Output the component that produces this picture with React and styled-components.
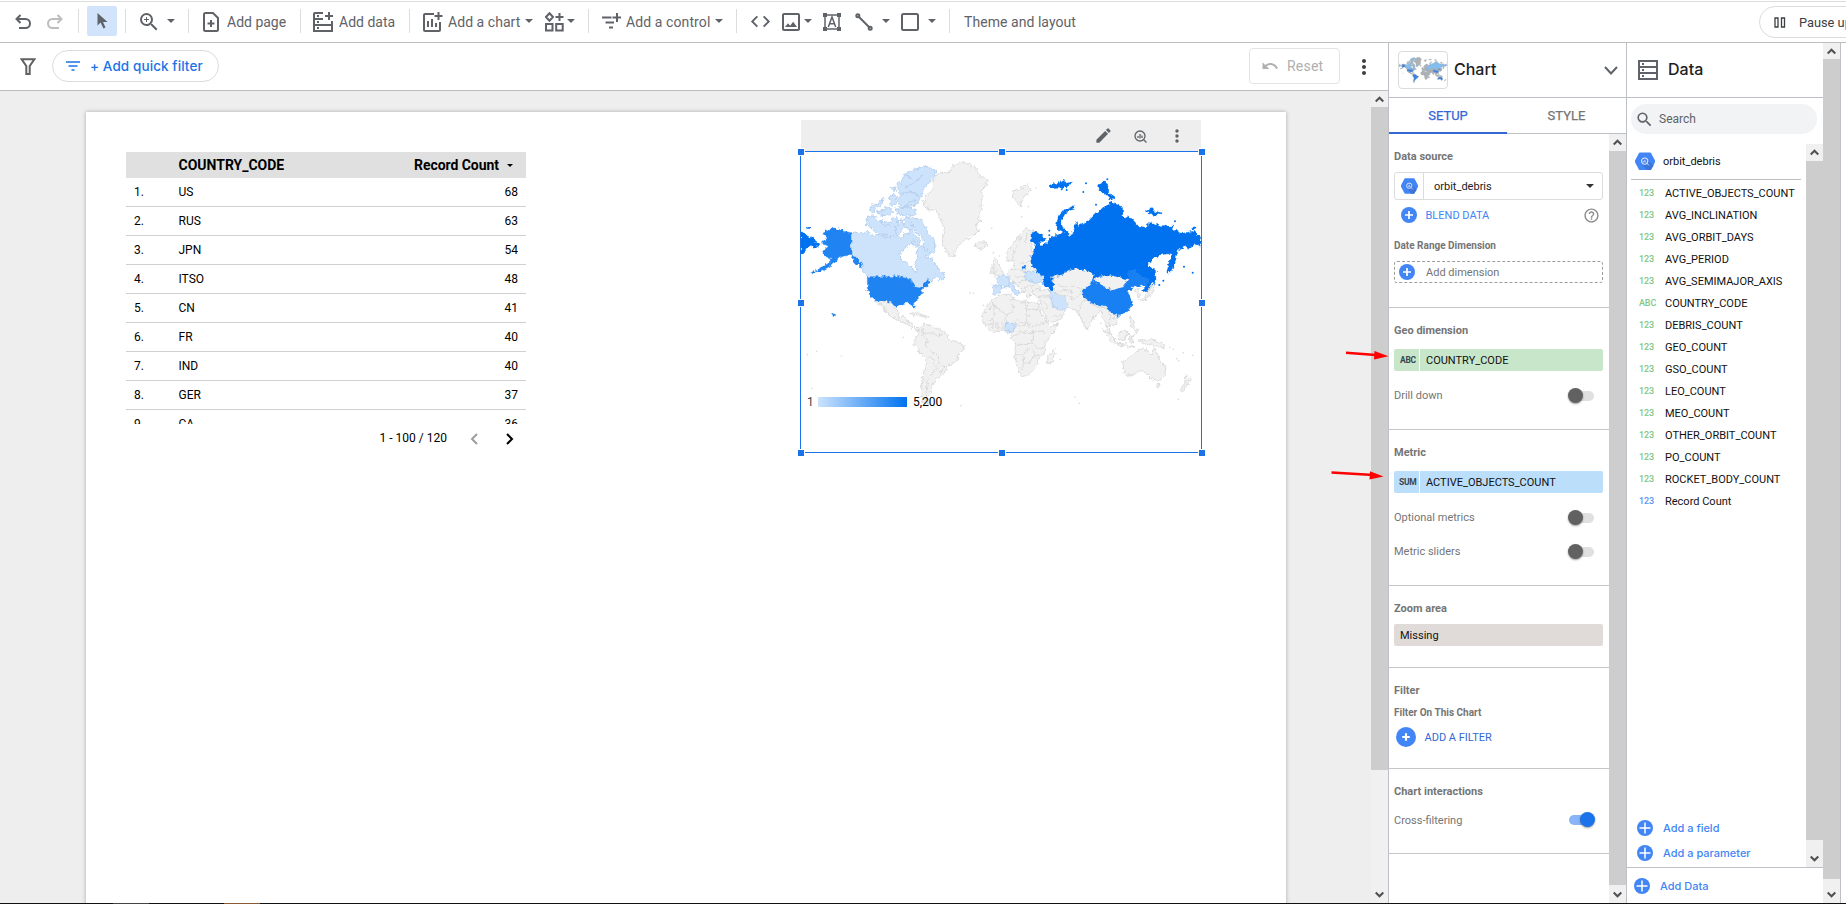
import React from "react";
import styled, { createGlobalStyle } from "styled-components";
import {
  MdCode,
  MdEdit,
  MdHelpOutline,
  MdMoreVert,
  MdOutlineImage,
  MdSearch,
  MdUndo,
  MdZoomIn,
} from "react-icons/md";

const Global = createGlobalStyle`
  * { box-sizing: border-box; }
  body { margin: 0; background: #fff; overflow: hidden; font-family: Roboto, "Liberation Sans", sans-serif; }
  svg { display: block; flex: none; }
`;

/* ---------- frame ---------- */
const Frame = styled.div`
  position: relative;
  width: 1846px;
  height: 904px;
  display: flex;
  flex-direction: column;
  overflow: hidden;
`;
const BottomStrip = styled.div`
  flex: none;
  height: 1px;
  background: linear-gradient(90deg, #111 113px, #444 113px, #444 149px, #111 149px, #111 224px, #8a5a34 224px, #8a5a34 260px, #111 260px);
`;
const Toolbar = styled.header`
  flex: none;
  height: 43px;
  display: flex;
  align-items: center;
  border-bottom: 1px solid #bdbdbd;
  box-shadow: inset 0 1px 0 #fff, inset 0 2px 0 #dcdcdc;
  color: #5f6368;
  overflow: hidden;
`;
const Tool = styled.div`
  flex: none;
  display: flex;
  align-items: center;
  justify-content: flex-start;
  margin-left: ${(p) => p.$gap || 0}px;
  width: ${(p) => p.$w}px;
  height: 30px;
  padding-top: 1px;
`;
const Selected = styled(Tool)`
  padding-top: 0;
  justify-content: center;
  background: #d2e3fc;
  border-radius: 2px;
`;
const ToolText = styled(Tool)`
  font-size: 14px;
  white-space: nowrap;
  letter-spacing: ${(p) => p.$ls || 0}px;
`;
const Sep = styled.i`
  flex: none;
  width: 1px;
  height: 24px;
  margin-left: ${(p) => p.$gap}px;
  background: #dadce0;
`;
const CaretMark = styled.i`
  flex: none;
  width: 0;
  height: 0;
  margin-left: ${(p) => p.$gap || 0}px;
  border: ${(p) => p.$s || 4}px solid transparent;
  border-top-color: ${(p) => p.$c || "#5f6368"};
  border-bottom: 0;
`;
const Pause = styled.div`
  flex: none;
  width: 140px;
  height: 32px;
  margin: 2px 0 0 685px;
  display: flex;
  align-items: center;
  gap: 13px;
  padding-left: 14px;
  border: 1px solid #dadce0;
  border-radius: 16px;
  color: #3c4043;
  font-size: 12.8px;
  white-space: nowrap;
`;
const Body = styled.div`
  flex: 1;
  min-height: 0;
  display: flex;
`;

/* ---------- scroll bars ---------- */
const Bar = styled.div`
  flex: none;
  width: 17px;
  display: flex;
  flex-direction: column;
  background: #f0f0f0;
`;
const BarEnd = styled.div`
  flex: none;
  height: ${(p) => p.$h}px;
  padding: ${(p) => (p.$down ? "0 0 5px" : "5px 0 0")};
  display: flex;
  align-items: ${(p) => (p.$down ? "flex-end" : "flex-start")};
  justify-content: center;
`;
const Thumb = styled.div`
  flex: none;
  height: ${(p) => p.$h}px;
  background: #cdcdcd;
`;
const Grow = styled.div`
  flex: 1;
`;
const Chevron = ({ down }) => (
  <svg width="9" height="7" viewBox="0 0 9 7">
    <path d={down ? "M.7 1.500 4.500 5.200 8.300 1.500" : "M.7 5.500 4.500 1.700 8.300 5.500"} fill="none" stroke="#505050" strokeWidth="2.1" />
  </svg>
);
const ScrollBar = ({ top = 17, thumb, bottom = 17 }) => (
  <Bar>
    <BarEnd $h={top}><Chevron /></BarEnd>
    <Thumb $h={thumb} />
    <Grow />
    <BarEnd $h={bottom} $down><Chevron down /></BarEnd>
  </Bar>
);

/* ---------- left side ---------- */
const Workspace = styled.main`
  flex: none;
  width: 1388px;
  display: flex;
  flex-direction: column;
`;
const FilterBar = styled.div`
  flex: none;
  height: 48px;
  display: flex;
  align-items: center;
  padding: 0 12px 0 20px;
  border-bottom: 1px solid #bdbdbd;
`;
const QuickFilter = styled.div`
  width: 167px;
  height: 32px;
  margin: -1px 0 0 16px;
  padding-left: 13px;
  display: flex;
  align-items: center;
  gap: 10px;
  border: 1px solid #dadce0;
  border-radius: 16px;
  color: #1a73e8;
  font: 500 13.5px Inter, Roboto, sans-serif;
  letter-spacing: 0.1px;
  white-space: nowrap;
`;
const Reset = styled.div`
  width: 91px;
  height: 36px;
  margin: -1px 12px 0 auto;
  padding-left: 11px;
  display: flex;
  align-items: center;
  gap: 8px;
  border: 1px solid #e4e4e4;
  border-radius: 4px;
  color: #b0b0b0;
  font-size: 14px;
  letter-spacing: 0.2px;
`;
const Canvas = styled.div`
  flex: 1;
  min-height: 0;
  display: flex;
`;
const Stage = styled.div`
  flex: 1;
  background: #eee;
  padding: 21px 0 0 86px;
  overflow: hidden;
`;
const Page = styled.div`
  width: 1200px;
  height: 900px;
  padding: 8px 84px 0 40px;
  display: flex;
  justify-content: space-between;
  background: #fff;
  box-shadow: 0 0 4px rgba(0, 0, 0, 0.3);
`;
const TableBox = styled.section`
  width: 400px;
  margin-top: 32px;
  color: #000;
`;
const TableHead = styled.div`
  height: 26px;
  display: flex;
  align-items: center;
  justify-content: space-between;
  padding: 0 13px 0 52.5px;
  background: #e0e0e0;
  font-size: 14px;
  font-weight: 700;
`;
const HeadRight = styled.span`
  display: flex;
  align-items: center;
  letter-spacing: -0.05px;
`;
const Rows = styled.div`
  height: 246px;
  overflow: hidden;
`;
const Row = styled.div`
  height: 29px;
  display: flex;
  align-items: center;
  padding: 0 8px 1px;
  border-bottom: 1px solid #d0d0d0;
  font-size: 12px;
  line-height: 26px;
`;
const Index = styled.span`
  width: 44.5px;
`;
const Code = styled.span`
  flex: 1;
`;
const Pager = styled.div`
  display: flex;
  align-items: center;
  justify-content: flex-end;
  padding: 6px 12px 0 0;
  font-size: 12px;
`;
const PagerArrows = styled.span`
  display: flex;
  gap: 28px;
  margin: 3px 0 0 23px;
`;
const ChartBox = styled.section`
  width: 402px;
`;
const ChartBar = styled.div`
  width: 400px;
  height: 31px;
  margin-left: 1px;
  display: flex;
  align-items: center;
  justify-content: flex-end;
  padding-right: 16px;
  background: #eee;
  color: #5f6368;
`;
const Selection = styled.div`
  position: relative;
  width: 402px;
  height: 302px;
  border: 1px solid #1a73e8;
`;
const Handle = styled.i`
  position: absolute;
  left: ${(p) => p.$x - 4}px;
  top: ${(p) => p.$y - 4}px;
  width: 8px;
  height: 8px;
  background: #1a73e8;
  border: 1px solid #fff;
`;
const Legend = styled.div`
  position: absolute;
  left: 6px;
  top: 243px;
  display: flex;
  align-items: center;
  font-size: 12px;
  line-height: 14px;
  color: #000;
  b { width: 11px; font-weight: 400; color: #444; }
`;
const Ramp = styled.i`
  width: 89px;
  height: 10px;
  margin-right: 6px;
  background: linear-gradient(90deg, #cce3fc, #0072f0);
`;

/* ---------- chart panel ---------- */
const Panel = styled.aside`
  flex: none;
  width: ${(p) => p.$w}px;
  display: flex;
  flex-direction: column;
  border-left: 1px solid #bdc1c6;
`;
const PanelHead = styled.div`
  flex: none;
  height: 55px;
  display: flex;
  align-items: center;
  padding: 0 8px 0 ${(p) => p.$pl}px;
  border-bottom: 1px solid #bdc1c6;
  color: #202124;
  font: 500 16px Inter, Roboto, sans-serif;
`;
const HeadText = styled.span`
  margin: -2px 0 0 ${(p) => p.$gap || 0}px;
`;
const Thumbnail = styled.div`
  width: 50px;
  height: 38px;
  margin-right: 6px;
  border: 1px solid #dadce0;
  border-radius: 4px;
  display: flex;
  align-items: center;
  justify-content: center;
`;
const Tabs = styled.div`
  flex: none;
  height: 36px;
  display: grid;
  grid-template-columns: 118px 1fr;
  border-bottom: 1px solid #bdc1c6;
`;
const Tab = styled.div`
  display: flex;
  align-items: center;
  justify-content: center;
  height: 36px;
  font-size: 13px;
  color: ${(p) => (p.$on ? "#3367d6" : "#757575")};
  border-bottom: 2px solid ${(p) => (p.$on ? "#3367d6" : "transparent")};
  -webkit-text-stroke: 0.25px;
`;
const PanelBody = styled.div`
  flex: 1;
  min-height: 0;
  display: flex;
`;
const Settings = styled.div`
  flex: 1;
  min-width: 0;
`;
const Group = styled.div`
  height: ${(p) => p.$h}px;
  padding: 0 6px 0 5px;
  border-bottom: 1px solid #c6c6c6;
  color: #757575;
  font-size: 11px;
`;
const Title = styled.div`
  height: ${(p) => p.$h || 16}px;
  line-height: 16px;
  padding-top: ${(p) => p.$pt || 0}px;
  box-sizing: content-box;
  font-weight: 700;
  font-size: ${(p) => (p.$small ? 10 : 11)}px;
`;
const Select = styled.div`
  height: 28px;
  display: flex;
  align-items: center;
  padding-right: 8px;
  border: 1px solid #dadce0;
  border-radius: 3px;
  color: #212121;
`;
const SelectIcon = styled.div`
  width: 29px;
  height: 26px;
  display: flex;
  align-items: center;
  justify-content: center;
  border-right: 1px solid #dadce0;
  margin-right: 10px;
`;
const Line = styled.div`
  display: flex;
  align-items: center;
  height: ${(p) => p.$h}px;
  padding: 0 ${(p) => p.$pr || 0}px 0 ${(p) => p.$pl || 0}px;
  gap: 8.5px;
  color: ${(p) => p.$c || "#757575"};
  font-size: 11px;
`;
const Drop = styled(Line)`
  border: 1px dashed #9e9e9e;
  border-radius: 3px;
  gap: 11px;
`;
const Chip = styled.div`
  height: 22px;
  display: flex;
  align-items: center;
  border-radius: 2px;
  background: ${(p) => p.$bg};
  color: #111;
  font-size: 11px;
  padding-left: ${(p) => p.$pl || 0}px;
`;
const Kind = styled.span`
  width: 26px;
  height: 22px;
  padding-left: ${(p) => p.$pl}px;
  border-right: 1px solid #fff;
  margin-right: 6px;
  font: 700 8.5px/23px Roboto, sans-serif;
  color: #37474f;
  letter-spacing: -0.3px;
`;
const Switch = styled.i`
  position: relative;
  width: 25px;
  height: 10px;
  margin-left: auto;
  border-radius: 5px;
  background: ${(p) => (p.$on ? "#8ab4f8" : "#e0e0e0")};
  &::after {
    content: "";
    position: absolute;
    top: -3px;
    left: ${(p) => (p.$on ? 11 : -1)}px;
    width: 15px;
    height: 15px;
    border-radius: 50%;
    background: ${(p) => (p.$on ? "#1a73e8" : "#616161")};
    box-shadow: 0 1px 2px rgba(0, 0, 0, 0.4);
  }
`;

/* ---------- data panel ---------- */
const Search = styled.div`
  flex: none;
  width: 186px;
  height: 30px;
  margin: 6px 0 10px 4px;
  padding-left: 4px;
  display: flex;
  align-items: center;
  gap: 5px;
  border-radius: 15px;
  background: #f1f3f4;
  color: #5f6368;
  font-size: 12px;
`;
const FieldArea = styled.div`
  flex: none;
  height: 724px;
  display: flex;
  border-bottom: 1px solid #bdc1c6;
`;
const Fields = styled.div`
  width: 179px;
  display: flex;
  flex-direction: column;
  font-size: 11px;
  color: #111;
`;
const Source = styled.div`
  height: 36px;
  margin: 0 5px 2px 4px;
  padding: 0 0 1px 4px;
  display: flex;
  align-items: center;
  gap: 8px;
  border-bottom: 1px solid #bdbdbd;
`;
const Field = styled.div`
  height: 22px;
  display: flex;
  align-items: center;
  padding-left: 12px;
  white-space: nowrap;
`;
const Tag = styled.span`
  width: 26px;
  font: 500 9px Roboto, sans-serif;
  letter-spacing: -0.1px;
  color: ${(p) => (p.$blue ? "#5c94f5" : "#81c784")};
`;
const Action = styled.div`
  flex: none;
  height: 25px;
  margin-bottom: ${(p) => p.$mb || 0}px;
  display: flex;
  align-items: center;
  gap: 10px;
  padding-left: ${(p) => p.$pl}px;
  color: #4285f4;
  font: 500 11px Inter, Roboto, sans-serif;
`;
const Edge = styled.div`
  width: 6px;
  border-left: 1px solid #bdc1c6;
`;
const ArrowLayer = styled.svg`
  position: absolute;
  left: 1326px;
  top: 345px;
`;

/* ---------- icons ---------- */
const St = ({ w = 20, h = 20, sw = 2, children, color = "currentColor" }) => (
  <svg width={w} height={h} viewBox={`0 0 ${w} ${h}`} fill="none" stroke={color} strokeWidth={sw}>{children}</svg>
);
const PlusDisc = ({ size = 16, thin, arm = 4 }) => (
  <svg width={size} height={size} viewBox="-8 -8 16 16">
    <circle r="8" fill="#4285f4" />
    <path d={`M${-arm} 0H${arm}M0 ${-arm}V${arm}`} stroke="#fff" strokeWidth={thin ? 1.5 : 1.7} />
  </svg>
);
const BigQuery = ({ w = 18 }) => (
  <svg width={w} height={w * 0.94} viewBox="0 0 20 18">
    <path d="M5 0h10q.7 0 1 .6l4 7.600q.3.800 0 1.600l-4 7.600q-.3.600-1 .6H5q-.7 0-1-.6L0 9.800q-.3-.8 0-1.600L4 .6Q4.300 0 5 0z" fill="#4285f4" />
    <path d="m12 7 6.500 6-2.500 4.400-.9.600h-3L7.500 12z" fill="#3b74db" />
    <circle cx="9.700" cy="8.700" r="3.100" fill="none" stroke="#dce8ff" strokeWidth="1.100" />
    <path d="m12 11 2 2M8.700 8.500v1.500M9.900 7.500V10M11 9v1" stroke="#dce8ff" strokeWidth=".9" />
  </svg>
);

/* ---------- map ---------- */
const GREY = "#f1f1f1";
const PALE = "#cce3fb";
const BLUE = "#1f84f2";
const DEEP = "#0072f0";

const LAND = [
  // North America
  [PALE, "183,372 205,366 215,374 232,363 250,380 275,371 300,377 318,370 332,386 345,372 360,368 368,360 374,372 384,384 392,390 385,398 368,388 366,400 350,410 330,425 332,448 350,460 366,470 370,485 378,488 380,470 374,458 384,446 380,430 388,412 398,402 412,412 418,430 408,440 424,446 440,470 462,492 464,508 446,510 440,498 426,512 415,508 405,520 390,535 372,530 366,512 345,504 330,500 232,500 214,476 213,462 198,442 183,436"],
  [BLUE, "183,368 160,363 130,352 112,363 98,370 112,384 94,402 116,408 98,424 106,440 126,444 120,456 100,470 62,489 96,482 132,462 144,444 162,438 183,436 200,444 216,466 213,474 195,456 183,440"],
  [BLUE, "232,500 330,500 345,504 366,512 372,530 390,534 406,518 414,508 418,520 396,540 390,558 372,574 377,594 371,597 363,578 340,580 320,588 318,597 306,580 290,575 258,574 240,558 232,535"],
  [BLUE, "126,612 131,610 137,618 132,620"],
  [BLUE, "50,352 58,349 62,353 55,357"],
  [PALE, "322,215 340,208 345,190 370,180 400,169 425,172 437,182 432,202 412,222 398,248 386,275 378,285 350,290 330,290 322,268 335,255 322,240"],
  [PALE, "318,294 350,292 378,298 378,314 345,316 322,312"],
  [PALE, "297,262 312,250 320,266 318,280 305,286"],
  [PALE, "238,300 250,282 262,284 280,262 276,282 262,296 246,306"],
  [PALE, "262,306 290,292 312,304 300,314 270,318"],
  [PALE, "230,345 233,318 252,318 262,332 290,336 305,340 308,325 320,320 325,350 335,322 340,345 330,375 300,380 262,372 240,352"],
  [PALE, "345,325 362,320 388,330 410,352 412,368 432,388 437,422 420,432 395,408 405,395 390,378 372,360 352,362 343,345"],
  [PALE, "366,395 378,390 390,404 380,412 366,406"],
  [PALE, "302,236 312,232 318,240 308,244"],
  [GREY, "430,210 450,188 482,186 486,166 520,155 556,170 566,196 596,210 582,235 572,240 578,262 570,285 578,298 566,320 572,336 556,346 566,362 545,380 522,392 500,412 492,440 476,434 462,412 456,384 464,356 450,325 440,302 412,298 400,282 406,262 426,242"],
  [GREY, "556,402 564,396 586,396 590,406 572,418 558,412"],
  [GREY, "258,574 290,575 306,582 322,600 326,620 345,620 348,632 364,638 372,652 392,652 400,658 376,660 350,642 322,630 296,615 284,592 270,578 288,604"],
  [GREY, "362,610 384,606 400,616 420,620 404,622 388,616 366,612"],
  // South America
  [GREY, "385,662 402,642 428,648 450,658 470,672 480,690 504,696 522,706 518,724 504,738 500,754 474,770 460,792 448,800 432,818 425,842 410,860 416,888 400,880 392,858 400,800 408,745 385,720 372,694 378,684"],
  // Europe
  [GREY, "650,450 652,422 690,376 710,356 735,362 728,372 722,392 724,420 728,440 722,455 750,490 742,516 750,530 752,545 748,560 726,552 716,562 700,548 690,530 672,520 660,500 648,494 660,478 668,472 674,458 664,450 655,455"],
  [GREY, "612,446 624,452 630,470 640,488 630,496 608,494 618,478 608,462"],
  [GREY, "602,478 612,474 612,488 602,490"],
  [PALE, "625,500 640,492 660,504 656,528 640,534 628,528 618,508"],
  [PALE, "606,526 636,530 630,548 608,554"],
  [PALE, "656,522 670,518 672,532 690,548 680,556 664,540 656,530"],
  [PALE, "706,488 730,484 762,502 752,516 735,520 708,508"],
  [GREY, "668,240 690,236 712,224 724,240 700,262 690,290 680,275 668,256"],
  [GREY, "722,538 778,540 782,556 740,560"],
  // Africa
  [GREY, "604,572 625,556 665,552 668,568 690,572 712,574 745,580 750,605 764,628 780,648 802,643 795,662 765,698 766,725 745,745 735,775 715,795 695,800 685,775 672,735 678,702 662,682 660,665 635,660 610,667 592,655 577,632 580,600"],
  [PALE, "646,638 676,637 674,655 660,668 645,660"],
  [GREY, "774,740 792,716 796,728 784,762 772,758"],
  // Western and southern Asia
  [GREY, "746,562 782,560 790,592 808,602 826,600 815,625 785,640 772,632 756,600"],
  [PALE, "778,542 800,552 830,554 832,592 812,604 790,590"],
  [GREY, "785,500 820,492 852,474 880,480 905,486 912,506 900,522 876,538 888,565 925,580 948,588 935,606 912,620 902,640 892,660 880,640 866,608 850,596 832,592 828,560 800,552 790,530"],
  [GREY, "912,506 950,494 985,500 1018,508 1000,532 970,540 930,526"],
  [GREY, "930,590 955,596 975,612 984,628 972,652 956,636 960,662 974,700 958,680 946,640 938,622"],
  // Russia and China
  [DEEP, "724,368 738,366 764,380 766,392 748,398 754,408 770,398 780,382 800,376 830,366 840,384 846,366 858,334 862,352 892,334 915,310 940,292 965,276 998,292 998,320 1026,326 1045,348 1066,352 1084,336 1112,350 1148,348 1150,362 1178,370 1212,362 1228,380 1234,412 1214,400 1202,418 1186,408 1160,424 1158,448 1142,486 1130,490 1136,458 1148,430 1112,434 1088,446 1070,470 1095,476 1092,512 1070,548 1058,540 1074,512 1048,500 1030,480 1018,508 985,500 950,494 912,506 905,486 880,480 852,474 820,492 785,500 792,520 788,542 756,522 764,504 745,490 722,455 728,425 738,405 722,388"],
  [DEEP, "33,363 52,378 66,384 90,402 80,414 60,406 48,424 33,432"],
  [DEEP, "798,352 804,322 824,298 856,286 850,298 826,310 812,336 818,352 842,372 824,370"],
  [DEEP, "778,228 792,220 804,226 812,212 824,206 828,220 844,216 832,230 812,234 790,236"],
  [DEEP, "926,226 938,212 950,222 952,240 966,254 976,270 960,266 944,250 928,244"],
  [DEEP, "1066,304 1084,296 1098,304 1118,310 1094,316 1080,312"],
  [DEEP, "1204,352 1216,350 1216,356 1206,357"],
  [DEEP, "1088,476 1096,478 1098,510 1092,520"],
  [DEEP, "696,470 707,469 707,475 696,475"],
  ["#1880f3", "872,545 905,520 912,506 930,526 970,540 1000,532 1018,508 1012,486 1034,480 1048,500 1078,506 1070,522 1050,530 1034,528 1014,545 1020,562 1028,580 1014,604 986,616 956,606 948,588 905,580 885,565"],
  ["#1880f3", "982,612 990,612 987,622 981,620"],
  // East Asia and Oceania
  [GREY, "1034,540 1044,536 1052,560 1044,566"],
  [GREY, "1052,572 1072,552 1080,530 1096,520 1090,550 1070,562 1058,574"],
  [GREY, "1018,618 1030,626 1032,650 1046,660 1040,668 1024,650"],
  [GREY, "984,670 1004,660 1014,668 1002,692 986,688"],
  [GREY, "936,656 960,672 984,700 976,704 954,682"],
  [GREY, "980,700 1010,702 1036,710 1014,710 984,706"],
  [GREY, "1018,678 1034,674 1024,684 1032,698 1020,696"],
  [GREY, "1044,688 1064,690 1090,688 1118,702 1126,716 1094,706 1066,704"],
  [GREY, "998,755 1020,742 1040,722 1060,714 1076,728 1084,736 1090,714 1102,732 1110,752 1128,772 1124,796 1108,814 1090,812 1070,790 1050,782 1022,796 1004,800"],
  [GREY, "1098,822 1110,824 1104,834 1098,830"],
  [GREY, "1186,796 1194,802 1206,806 1192,824 1174,848 1170,838 1188,820"],
];

const BORDERS = [
  "M400 655 396 675 412 688 408 710 425 720 445 740 448 760 462 770 452 790M408 745 425 738 432 758 440 775 415 800 408 850",
  "M385 662 412 670 430 668 440 680 460 674",
  "M605 572 612 585 592 605 580 605M612 585 650 615 672 600 660 568M650 615 646 640M612 585 612 625 590 632M690 572 710 585 710 640 690 640 680 625M710 598H752M676 637 690 650 710 640 728 650 764 640M706 610 720 620",
  "M610 630 608 662M620 636 622 664M636 636 636 660M592 640 608 645M664 684 690 666 728 668 726 700 706 704 672 702M728 668 750 660 766 670M728 700 748 718 765 715M672 735H705L712 715 728 715 735 738 720 758 700 760 695 780M700 760 700 738M735 738 748 735",
  "M785 500 792 520 820 528 850 526 876 538M800 552 818 540 850 545M830 554 850 570 865 560 876 545M866 608 872 580 888 565M905 580 920 588 944 592",
  "M660 478 690 480 706 488M672 500 706 500M690 515 708 508M700 548 710 530 735 525M670 520 690 515M692 376 686 400 670 430 668 450M712 368 706 400M690 460 722 455",
  "M756 600 772 590 760 575M790 620 812 612M956 606 962 628M975 612 968 630",
];
const FINE_BLUE = "M330 220 352 232 380 215 395 198M332 250 360 246 385 256M350 195 365 205M345 290 360 275 378 270M270 330 285 350 300 345M360 335 372 350M316 345 318 370";

const SPECKS = [
  [605, 355], [695, 320], [738, 234], [715, 290], [540, 548], [550, 550], [340, 682], [80, 724], [52, 734], [154, 738], [66, 835], [513, 887], [855, 861], [868, 880], [811, 748], [1165, 868], [1208, 736], [1160, 746], [1166, 752], [1140, 712], [1150, 718], [932, 640], [610, 428], [628, 438], [580, 586], [1180, 728],
];
const BLUE_SPECKS = [[880, 246], [888, 220], [778, 376], [778, 362], [1155, 334], [1182, 470], [1208, 488], [1120, 512], [952, 208], [918, 284], [815, 238], [830, 240], [70, 487], [1108, 525]];

const WorldMap = () => (
  <svg width="400" height="300" viewBox="33 126 1200 900">
    <defs>
      <filter id="coast" x="0" y="0" width="100%" height="100%" colorInterpolationFilters="sRGB">
        <feTurbulence type="fractalNoise" baseFrequency="0.09" numOctaves="2" seed="4" />
        <feDisplacementMap in="SourceGraphic" scale="17" xChannelSelector="R" yChannelSelector="G" />
      </filter>
    </defs>
    <g filter="url(#coast)" strokeLinejoin="round">
      <rect x="33" y="126" width="1200" height="900" fill="none" />
      {LAND.map(([fill, pts], i) => (
        <polygon key={i} points={pts} fill={fill} stroke={fill === GREY ? "#dadada" : fill === PALE ? "#b5cfee" : fill} strokeWidth={fill === GREY || fill === PALE ? 3 : 1} />
      ))}
      {BORDERS.map((d, i) => <path key={i} d={d} fill="none" stroke="#d9d9d9" strokeWidth="3" />)}
      <path d={FINE_BLUE} fill="none" stroke="#b0cbed" strokeWidth="3" />
    </g>
    {SPECKS.map(([x, y], i) => <circle key={i} cx={x} cy={y} r="2.500" fill="#ddd" />)}
    {BLUE_SPECKS.map(([x, y], i) => <circle key={i} cx={x} cy={y} r="3" fill={DEEP} />)}
  </svg>
);

const THUMB_COLORS = { [GREY]: "#aeb2b5", [PALE]: "#83bdf0", [BLUE]: "#3b82e0", [DEEP]: "#83bdf0", "#1880f3": "#3b82e0" };
const isSouthern = (pts) => pts.startsWith("998,755") || pts.startsWith("385,662");
const MiniMap = () => (
  <svg width="48" height="26" viewBox="33 150 1200 750" preserveAspectRatio="none">
    {LAND.map(([fill, pts], i) => (
      <polygon key={i} points={pts} fill={isSouthern(pts) ? "#3b82e0" : THUMB_COLORS[fill]} stroke="#a0a4a8" strokeWidth="12" />
    ))}
  </svg>
);

/* ---------- data ---------- */
const ROWS = [["US", 68], ["RUS", 63], ["JPN", 54], ["ITSO", 48], ["CN", 41], ["FR", 40], ["IND", 40], ["GER", 37], ["CA", 36]];
const FIELDS = ["ACTIVE_OBJECTS_COUNT", "AVG_INCLINATION", "AVG_ORBIT_DAYS", "AVG_PERIOD", "AVG_SEMIMAJOR_AXIS", "COUNTRY_CODE", "DEBRIS_COUNT", "GEO_COUNT", "GSO_COUNT", "LEO_COUNT", "MEO_COUNT", "OTHER_ORBIT_COUNT", "PO_COUNT", "ROCKET_BODY_COUNT", "Record Count"];
const HANDLES = [[0, 0], [201, 0], [401, 0], [0, 151], [401, 151], [0, 301], [201, 301], [401, 301]];

const TopTools = () => (
  <Toolbar>
    <Tool $gap={15} $w={16}>
      <St w={16} h={16}><path d="M5.500 1 1.500 5l4 4M2 5h8.500a4.500 4.500 0 0 1 0 9H4" /></St>
    </Tool>
    <Tool $gap={16} $w={16}>
      <St w={16} h={16} color="#bdbdbd"><path d="M10.500 1l4 4-4 4M14 5H5.500a4.500 4.500 0 0 0 0 9H12" /></St>
    </Tool>
    <Sep $gap={15} />
    <Selected $gap={8} $w={30}>
      <svg width="12" height="16" viewBox="0 0 12 16"><path d="M1.500 0v12.500l3-3L7.500 15.500l2-1L7 9h4.500z" fill="#5f6368" /></svg>
    </Selected>
    <Sep $gap={8} />
    <Tool $gap={11} $w={24}><MdZoomIn size={24} /></Tool>
    <CaretMark $gap={6} />
    <Sep $gap={13} />
    <Tool $gap={14} $w={16}>
      <St w={16} h={20}><path d="M10 1H2.500Q1 1 1 2.500v15Q1 19 2.500 19h11q1.500 0 1.500-1.500V6zM8 8v7M4.500 11.500h7" /></St>
    </Tool>
    <ToolText $gap={8} $w={73}>Add page</ToolText>
    <Sep $gap={0} />
    <Tool $gap={12} $w={20}>
      <St w={20} h={20}><path d="M10 1H2Q1 1 1 2v5h9M1 7v6h18V9M1 13v6h18v-6M16 0v8M12 4h8" /><path d="M4 4h2M4 10h2M4 16h2" /></St>
    </Tool>
    <ToolText $gap={6} $w={70}>Add data</ToolText>
    <Sep $gap={0} />
    <Tool $gap={13} $w={20}>
      <St w={20} h={20}><path d="M11 2H2Q1 2 1 3v15q0 1 1 1h14q1 0 1-1v-8M15.500 0v8M11.500 4h8M5 15V9M9 15V7M13 15v-4" /></St>
    </Tool>
    <ToolText $gap={5} $w={77} $ls={0.05}>Add a chart</ToolText>
    <CaretMark />
    <Tool $gap={12} $w={19}>
      <St w={19} h={20}><path d="M4.500 1.200 8 5 4.500 8.800 1 5zM14.500 1v8M10.500 5h8M1 12h6.500v6.500H1zM11.200 12h6.500v6.500h-6.500z" /></St>
    </Tool>
    <CaretMark $gap={3} />
    <Sep $gap={13} />
    <Tool $gap={13} $w={19}>
      <St w={19} h={20}><path d="M0 5.500h9.500M15 1v9M10.500 5.500h8.500M3.500 10.500h8.500M7 15.500h4" /></St>
    </Tool>
    <ToolText $gap={5} $w={89} $ls={0.1}>Add a control</ToolText>
    <CaretMark />
    <Sep $gap={13} />
    <Tool $gap={12} $w={24}><MdCode size={23} /></Tool>
    <Tool $gap={6} $w={24}><MdOutlineImage size={24} /></Tool>
    <CaretMark $gap={1} />
    <Tool $gap={11} $w={19}>
      <St w={18} h={18} sw={1.500}>
        <path d="M2 2h14v14H2zM5.300 14 9 4l3.700 10M6.500 10.700h5" />
        <path d="M0 2h4M14 2h4M0 16h4M14 16h4" strokeWidth="4" />
      </St>
    </Tool>
    <Tool $gap={13} $w={18}>
      <St w={18} h={18}><path d="m3 3 12 12" /><circle cx="2.800" cy="2.800" r="1.500" /><circle cx="15.200" cy="15.200" r="1.500" /></St>
    </Tool>
    <CaretMark $gap={9} />
    <Tool $gap={11} $w={18}>
      <St w={18} h={18}><rect x="1" y="1" width="16" height="16" rx="1.500" /></St>
    </Tool>
    <CaretMark $gap={9} />
    <Sep $gap={13} />
    <ToolText $gap={14} $w={110} $ls={0.05}>Theme and layout</ToolText>
    <Pause>
      <St w={12} h={11} sw={1.300}><path d="M1 1h3v9H1zM7.500 1h3v9h-3z" /></St>
      Pause updates
    </Pause>
  </Toolbar>
);

const DataTable = () => (
  <TableBox>
    <TableHead>
      <span>COUNTRY_CODE</span>
      <HeadRight>Record Count <CaretMark $gap={8} $s={3} $c="#000" /></HeadRight>
    </TableHead>
    <Rows>
      {ROWS.map(([code, n], i) => (
        <Row key={code}><Index>{i + 1}.</Index><Code>{code}</Code><span>{n}</span></Row>
      ))}
    </Rows>
    <Pager>
      <span>1 - 100 / 120</span>
      <PagerArrows>
        <St w={8} h={12} color="#9e9e9e"><path d="M7 1 2 6l5 5" /></St>
        <St w={8} h={12} color="#000"><path d="m1 1 5 5-5 5" /></St>
      </PagerArrows>
    </Pager>
  </TableBox>
);

const GeoChart = () => (
  <ChartBox>
    <ChartBar>
      <MdEdit size={19} />
      <Tool $gap={21} $w={14}>
        <St w={13} h={13} sw={1.300}><circle cx="6" cy="6" r="5" /><path d="m9.500 9.500 3 3M4 6v2M6 4v4.500M8 5.500v2.500" /></St>
      </Tool>
      <Tool $gap={19} $w={18}><MdMoreVert size={20} /></Tool>
    </ChartBar>
    <Selection>
      <WorldMap />
      <Legend><b>1</b><Ramp />5,200</Legend>
      {HANDLES.map(([x, y]) => <Handle key={`${x}-${y}`} $x={x} $y={y} />)}
    </Selection>
  </ChartBox>
);

const ChartPanel = () => (
  <Panel $w={238}>
    <PanelHead $pl={9}>
      <Thumbnail><MiniMap /></Thumbnail>
      <HeadText>Chart</HeadText>
      <Grow />
      <St w={14} h={9} color="#5f6368"><path d="m1 1 6 6.500L13 1" /></St>
    </PanelHead>
    <Tabs><Tab $on>SETUP</Tab><Tab>STYLE</Tab></Tabs>
    <PanelBody>
      <Settings>
        <Group $h={174}>
          <Title $pt={15} $h={23}>Data source</Title>
          <Select>
            <SelectIcon><BigQuery w={17} /></SelectIcon>
            orbit_debris
            <Grow />
            <CaretMark $c="#333" />
          </Select>
          <Line $h={30} $pl={7} $pr={3} $c="#4285f4">
            <PlusDisc />BLEND DATA<Grow /><MdHelpOutline size={17} color="#8a8a8a" />
          </Line>
          <Title $small $pt={8} $h={23}>Date Range Dimension</Title>
          <Drop $h={22} $pl={4}><PlusDisc />Add dimension</Drop>
        </Group>
        <Group $h={122}>
          <Title $pt={15} $h={26}>Geo dimension</Title>
          <Chip $bg="#c8e6c9"><Kind $pl={6}>ABC</Kind>COUNTRY_CODE</Chip>
          <Line $h={49} $pr={9}>Drill down<Switch /></Line>
        </Group>
        <Group $h={156}>
          <Title $pt={15} $h={26}>Metric</Title>
          <Chip $bg="#bbdefb"><Kind $pl={5}>SUM</Kind>ACTIVE_OBJECTS_COUNT</Chip>
          <Line $h={49} $pr={9}>Optional metrics<Switch /></Line>
          <Line $h={19} $pr={9}>Metric sliders<Switch /></Line>
        </Group>
        <Group $h={82}>
          <Title $pt={15} $h={23}>Zoom area</Title>
          <Chip $bg="#e0dbd8" $pl={6}>Missing</Chip>
        </Group>
        <Group $h={101}>
          <Title $pt={15} $h={20}>Filter</Title>
          <Title $small $pt={2} $h={21}>Filter On This Chart</Title>
          <Line $h={22} $pl={2} $c="#3367d6"><PlusDisc size={20} arm={3} />ADD A FILTER</Line>
        </Group>
        <Group $h={85}>
          <Title $pt={15}>Chart interactions</Title>
          <Line $h={40} $pr={9}>Cross-filtering<Switch $on /></Line>
        </Group>
      </Settings>
      <ScrollBar thumb={734} bottom={18} />
    </PanelBody>
  </Panel>
);

const DataPanel = () => (
  <Panel $w={197}>
    <PanelHead $pl={11}>
      <St w={20} h={20} color="#5f6368"><path d="M1 1h18v18H1zM1 7h18M1 13h18" /><path d="M4 4h2M4 10h2M4 16h2" /></St>
      <HeadText $gap={10}>Data</HeadText>
    </PanelHead>
    <Search><MdSearch size={19} />Search</Search>
    <FieldArea>
      <Fields>
        <Source><BigQuery w={20} />orbit_debris</Source>
        {FIELDS.map((name) => (
          <Field key={name}>
            <Tag $blue={name === "Record Count"}>{name === "COUNTRY_CODE" ? "ABC" : "123"}</Tag>
            {name}
          </Field>
        ))}
        <Grow />
        <Action $pl={10}><PlusDisc thin arm={5.5} />Add a field</Action>
        <Action $pl={10} $mb={2}><PlusDisc thin arm={5.5} />Add a parameter</Action>
      </Fields>
      <ScrollBar thumb={679} bottom={27} />
    </FieldArea>
    <Grow />
    <Action $pl={7} $mb={5}><PlusDisc thin arm={5.5} />Add Data</Action>
  </Panel>
);

export default function App() {
  return (
    <Frame>
      <Global />
      <TopTools />
      <Body>
        <Workspace>
          <FilterBar>
            <St w={16} h={17} color="#616161"><path d="M1.500 1.200h13L9.700 8v8H6.300V8z" /></St>
            <QuickFilter>
              <St w={14} h={10}><path d="M0 1h14M2.500 5h9M5.500 9h3" strokeWidth="1.700" /></St>
              + Add quick filter
            </QuickFilter>
            <Reset><MdUndo size={18} />Reset</Reset>
            <MdMoreVert size={24} color="#3c4043" />
          </FilterBar>
          <Canvas>
            <Stage>
              <Page><DataTable /><GeoChart /></Page>
            </Stage>
            <ScrollBar top={16} thumb={663} />
          </Canvas>
        </Workspace>
        <ChartPanel />
        <DataPanel />
        <ScrollBar top={16} thumb={820} bottom={24} />
        <Edge />
      </Body>
      <BottomStrip />
      <ArrowLayer width="70" height="140" viewBox="1326 345 70 140">
        <g stroke="#f00" strokeWidth="2.600" fill="#f00">
          <path d="m1346 352.700 30 2.300M1331.500 472.500l42 2.500" />
          <path d="m1374.500 351 14 5.300-14.500 3.200zM1370 471.200l13.500 5.300-14 3.100z" strokeWidth="0" />
        </g>
      </ArrowLayer>
    </Frame>
  );
}
